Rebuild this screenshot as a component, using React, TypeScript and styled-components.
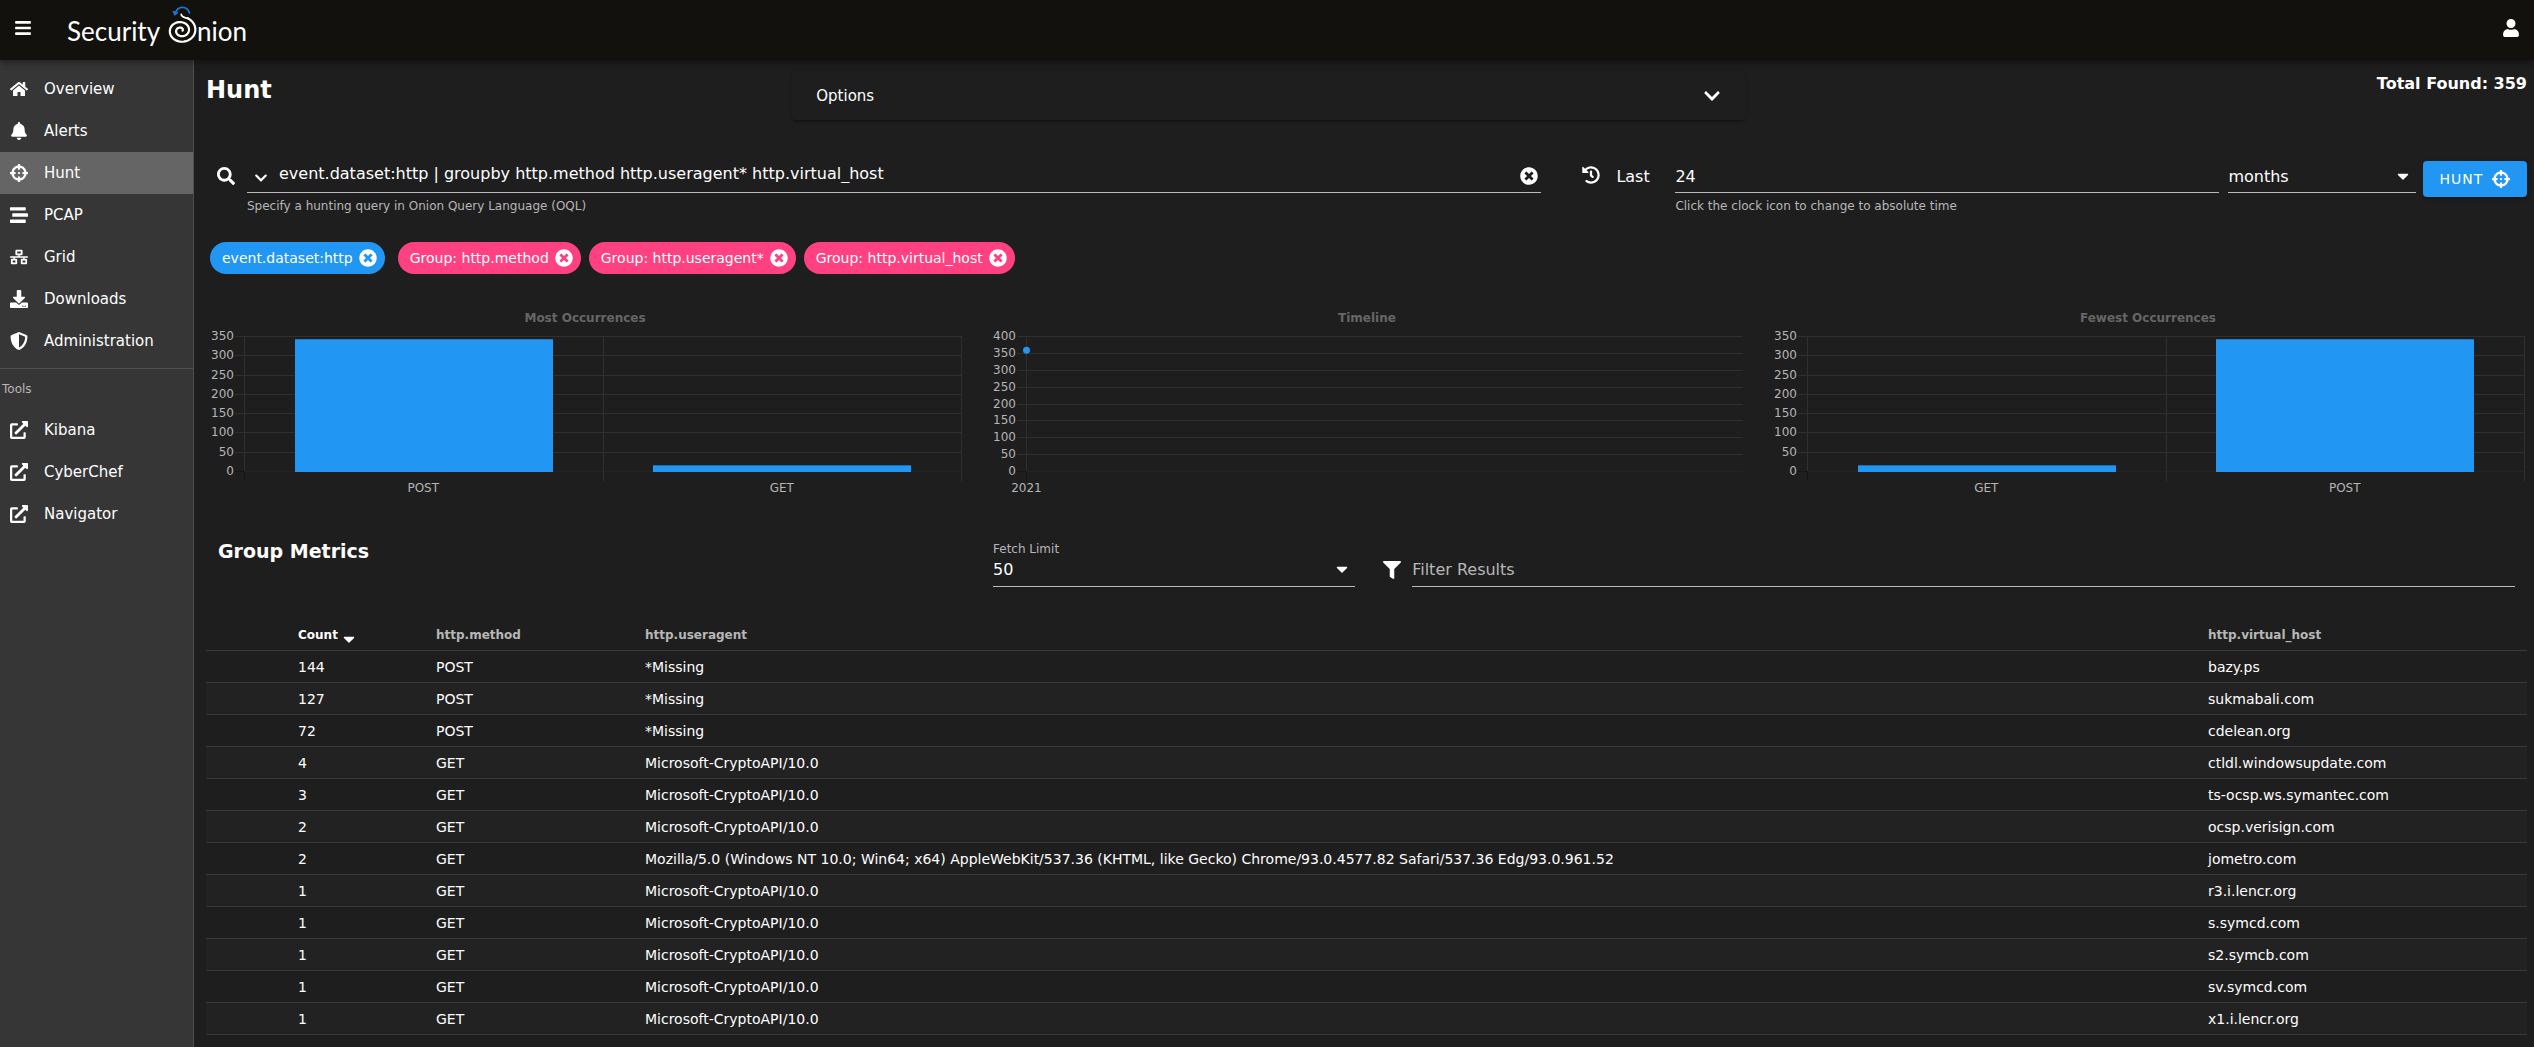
import React, { useLayoutEffect, useRef, useState } from 'react';
import styled, { createGlobalStyle } from 'styled-components';
import {
  FaBars,
  FaBell,
  FaCaretDown,
  FaChevronDown,
  FaCrosshairs,
  FaDownload,
  FaExternalLinkAlt,
  FaFilter,
  FaHistory,
  FaHome,
  FaNetworkWired,
  FaSearch,
  FaShieldAlt,
  FaStream,
  FaTimesCircle,
  FaUser,
} from 'react-icons/fa';

const c = {
  bar: '#12110d',
  page: '#1e1e1e',
  side: '#363636',
  active: '#656565',
  line: '#4f4f4f',
  rowLine: '#3a3a3a',
  rowAlt: '#222222',
  text: '#ffffff',
  muted: '#b7b7b7',
  underline: '#bbbbbb',
  blue: '#2196f3',
  pink: '#ff4081',
};

const GlobalStyle = createGlobalStyle`
  * { box-sizing: border-box; }
  body {
    margin: 0;
    background: ${c.page};
    color: ${c.text};
    font-family: "DejaVu Sans", sans-serif;
    font-size: 16px;
  }
  button, input, select { font: inherit; color: inherit; }
  h1, h2, p { margin: 0; }
`;

const Icon = styled.span<{ $size?: number }>`
  display: inline-flex;
  flex: none;
  svg {
    display: block;
    width: auto;
    height: ${(p) => p.$size ?? 18}px;
  }
`;

const IconButton = styled.button`
  display: inline-flex;
  padding: 0;
  border: 0;
  background: none;
  cursor: pointer;
`;

/* ---------- top bar ---------- */

const TopBar = styled.header`
  position: relative;
  z-index: 1;
  display: flex;
  align-items: center;
  height: 60px;
  padding: 0 14px 4px;
  background: ${c.bar};
  box-shadow: 0 2px 4px -1px rgba(0, 0, 0, 0.2), 0 4px 5px rgba(0, 0, 0, 0.14), 0 1px 10px rgba(0, 0, 0, 0.12);
`;

const LogoLink = styled.a`
  display: block;
  margin: 0 auto 0 36px;
  color: inherit;
  svg { display: block; }
  text { font-family: Lato, sans-serif; font-size: 26px; }
`;

function spiral(cx: number, cy: number, r0: number, r1: number, turns: number, end: number) {
  const steps = 72;
  const pts: string[] = [];
  for (let i = 0; i <= steps; i++) {
    const t = i / steps;
    const a = end + (1 - t) * turns * Math.PI * 2;
    const r = r0 + (r1 - r0) * t;
    pts.push(`${(cx + r * Math.cos(a)).toFixed(2)} ${(cy + r * 0.88 * Math.sin(a)).toFixed(2)}`);
  }
  return 'M' + pts.join('L');
}

function Logo() {
  return (
    <LogoLink href="#" aria-label="Security Onion">
      <svg width="184" height="56" viewBox="66 0 184 56" fill="none" strokeLinecap="round">
        <text x="65" y="41" fill="#fff">Security</text>
        <text x="195" y="41" fill="#fff">nion</text>
        <path d={spiral(179, 30.5, 1.5, 15.5, 2.2, -Math.PI * 0.36)} stroke="#fff" strokeWidth="2.2" />
        <path d="M185.700 18.400 C182 17 179.500 17.500 179.300 14.500" stroke="#fff" strokeWidth="1.8" />
        <path d="M187.500 13 C185 5.500 175.500 5.500 173.200 13.500" stroke="#1976d2" strokeWidth="1.8" />
        <path d="M171 11.500 L172.800 15.200 L175.800 12.800 Z" fill="#1976d2" stroke="#1976d2" />
      </svg>
    </LogoLink>
  );
}

/* ---------- sidebar ---------- */

const Shell = styled.div`
  display: grid;
  grid-template-columns: 194px minmax(0, 1fr);
  min-height: calc(100vh - 60px);
`;

const Sidebar = styled.nav`
  padding-top: 8px;
  background: ${c.side};
  border-right: 1px solid ${c.line};
`;

const NavItem = styled.a<{ $active?: boolean }>`
  display: grid;
  grid-template-columns: 34px 1fr;
  align-items: center;
  height: 42px;
  padding-left: 10px;
  background: ${(p) => (p.$active ? c.active : 'transparent')};
  color: inherit;
  font-size: 15px;
  text-decoration: none;
`;

const NavSection = styled.h2`
  height: 41px;
  margin-top: 6px;
  padding-left: 2px;
  border-top: 1px solid ${c.line};
  color: ${c.muted};
  font-size: 12px;
  font-weight: 400;
  line-height: 40px;
`;

const pages = [
  { label: 'Overview', icon: <FaHome /> },
  { label: 'Alerts', icon: <FaBell /> },
  { label: 'Hunt', icon: <FaCrosshairs />, active: true },
  { label: 'PCAP', icon: <FaStream /> },
  { label: 'Grid', icon: <FaNetworkWired /> },
  { label: 'Downloads', icon: <FaDownload /> },
  { label: 'Administration', icon: <FaShieldAlt /> },
];
const tools = ['Kibana', 'CyberChef', 'Navigator'];

/* ---------- page heading ---------- */

const Main = styled.main`
  padding: 12px 7px 10px 12px;
`;

const HeadRow = styled.div`
  display: grid;
  grid-template-columns: 3fr 5fr 4fr;
`;

const Title = styled.h1`
  padding-top: 2px;
  font-size: 24px;
  line-height: 32px;
`;

const OptionsPanel = styled.button`
  display: flex;
  align-items: center;
  justify-content: space-between;
  height: 48px;
  margin: 0 8px 0 6px;
  padding: 0 24px;
  border: 0;
  border-radius: 4px;
  background: ${c.page};
  box-shadow: 0 3px 1px -2px rgba(0, 0, 0, 0.2), 0 2px 2px rgba(0, 0, 0, 0.14), 0 1px 5px rgba(0, 0, 0, 0.12);
  font-size: 15px;
`;

const Total = styled.p`
  font-weight: 700;
  line-height: 24px;
  text-align: right;
`;

/* ---------- query row ---------- */

const QueryRow = styled.form`
  display: flex;
  align-items: flex-start;
  margin-top: 40px;
  padding-left: 11px;
`;

const Lead = styled.div`
  display: flex;
  align-items: center;
  flex: none;
  height: 32px;
`;

const QueryLead = styled(Lead)`
  width: 30px;
`;

const TimeLead = styled(Lead)`
  gap: 16px;
  width: 93px;
  margin-left: 41px;
`;

const ClockButton = styled(IconButton)`
  padding-bottom: 2px;
`;

const Field = styled.div<{ $grow: number }>`
  flex: ${(p) => p.$grow} 1 0;
  min-width: 0;
`;

const UnitField = styled(Field)`
  margin-left: 9px;
`;

const Line = styled.div`
  display: flex;
  align-items: center;
  height: 33px;
  border-bottom: 1px solid ${c.underline};
`;

const QueryLine = styled(Line)`
  padding: 0 3px 0 7px;
`;

const HistoryButton = styled(IconButton)`
  padding-top: 4px;
`;

const TextInput = styled.input`
  flex: 1;
  min-width: 0;
  width: 100%;
  height: 32px;
  padding: 0;
  border: 0;
  outline: 0;
  background: none;
  &::placeholder { color: ${c.muted}; opacity: 1; }
`;

const QueryInput = styled(TextInput)`
  padding: 0 11px 5px;
`;

const Select = styled.select`
  appearance: none;
  flex: 1;
  min-width: 0;
  height: 28px;
  padding: 0;
  border: 0;
  outline: 0;
  background: none;
`;

const Caret = styled(Icon)`
  padding-right: 4px;
  pointer-events: none;
`;

const Hint = styled.p`
  padding-top: 6px;
  color: ${c.muted};
  font-size: 12px;
  line-height: 14px;
`;

const HuntButton = styled.button`
  display: flex;
  align-items: center;
  justify-content: center;
  gap: 9px;
  flex: none;
  width: 104px;
  height: 36px;
  margin: 1px 0 0 7px;
  padding: 0;
  border: 0;
  border-radius: 4px;
  background: ${c.blue};
  box-shadow: 0 3px 1px -2px rgba(0, 0, 0, 0.2), 0 2px 2px rgba(0, 0, 0, 0.14), 0 1px 5px rgba(0, 0, 0, 0.12);
  font-size: 14px;
  letter-spacing: 1px;
`;

/* ---------- filter chips ---------- */

const Chips = styled.div`
  display: flex;
  gap: 8px;
  margin-top: 29px;
  padding-left: 4px;
`;

const Chip = styled.span<{ $tone: 'blue' | 'pink' }>`
  display: inline-flex;
  align-items: center;
  gap: 6px;
  height: 32px;
  margin-right: ${(p) => (p.$tone === 'blue' ? 5 : 0)}px;
  padding: 0 8px 0 12px;
  border-radius: 16px;
  background: ${(p) => c[p.$tone]};
  font-size: 14px;
`;

function FilterChip({ tone, label }: { tone: 'blue' | 'pink'; label: string }) {
  return (
    <Chip $tone={tone}>
      {label}
      <IconButton type="button" aria-label={`Remove ${label}`}><Icon><FaTimesCircle /></Icon></IconButton>
    </Chip>
  );
}

/* ---------- charts ---------- */

const ChartRow = styled.div`
  display: grid;
  grid-template-columns: repeat(3, minmax(0, 1fr));
  gap: 24px;
  margin-top: 26px;
`;

const ChartSvg = styled.svg`
  display: block;
  width: 100%;
  height: 200px;
  font-size: 12px;
`;

type ChartProps = {
  title: string;
  max: number;
  bars?: { label: string; value: number }[];
  point?: { label: string; value: number };
};

function Chart({ title, max, bars, point }: ChartProps) {
  const ref = useRef<SVGSVGElement>(null);
  const [width, setWidth] = useState(758);
  useLayoutEffect(() => {
    const measure = () => ref.current && setWidth(Math.round(ref.current.getBoundingClientRect().width));
    measure();
    window.addEventListener('resize', measure);
    return () => window.removeEventListener('resize', measure);
  }, []);

  const left = 38;
  const right = width - 3;
  const top = 36;
  const bottom = 171;
  const y = (v: number) => bottom + 0.5 - (v / max) * (bottom - top);
  const ticks = Array.from({ length: max / 50 + 1 }, (_, i) => i * 50);
  const slot = bars ? (right - left) / bars.length : 0;

  return (
    <ChartSvg ref={ref} role="img" aria-label={title}>
      <text x={width / 2} y="22" textAnchor="middle" fontWeight="700" fill="#666">{title}</text>
      {ticks.map((v) => (
        <g key={v}>
          <line x1={left - 9} x2={right} y1={Math.floor(y(v)) + 0.5} y2={Math.floor(y(v)) + 0.5} stroke={v ? '#2f2f2f' : '#242424'} />
          <text x={left - 10} y={Math.floor(y(v)) + 4} textAnchor="end" fill="#b5b5b5">{v}</text>
        </g>
      ))}
      <line x1={left - 9} x2={left} y1={bottom + 0.5} y2={bottom + 0.5} stroke="#151515" />
      <line x1={left + 0.5} x2={left + 0.5} y1={top} y2={bottom} stroke="#2f2f2f" />
      <line x1={left + 0.5} x2={left + 0.5} y1={bottom} y2={bottom + 10} stroke="#151515" />
      {bars?.map((b, i) => {
        const x = Math.round(left + slot * (i + 1)) + 0.5;
        return <line key={b.label} x1={x} x2={x} y1={top} y2={bottom + 10} stroke="#2f2f2f" />;
      })}
      {bars?.map((b, i) => (
        <g key={b.label}>
          <rect x={Math.ceil(left + slot * (i + 0.14))} y={y(b.value)} width={Math.round(slot * 0.72)} height={bottom + 1 - y(b.value)} fill={c.blue} />
          <text x={left + slot * (i + 0.5)} y="192" textAnchor="middle" fill="#b5b5b5">{b.label}</text>
        </g>
      ))}
      {point && (
        <g>
          <circle cx={left + 0.5} cy={y(point.value)} r="3.5" fill={c.blue} />
          <text x={left + 0.5} y="192" textAnchor="middle" fill="#b5b5b5">{point.label}</text>
        </g>
      )}
    </ChartSvg>
  );
}

/* ---------- group metrics ---------- */

const MetricsHead = styled.div`
  display: grid;
  grid-template-columns: 33fr 16fr 50fr;
  gap: 28px;
  margin-top: 40px;
  padding: 0 12px;
`;

const Subtitle = styled.h2`
  font-size: 19px;
  line-height: 22px;
`;

const SelectLabel = styled.label`
  display: block;
  color: ${c.muted};
  font-size: 12px;
  line-height: 18px;
`;

const MetricLine = styled(Line)`
  height: 29px;
  padding-bottom: 6px;
`;

const FilterBox = styled.div`
  display: flex;
  align-items: flex-end;
  gap: 11px;
`;

const FilterIcon = styled.label`
  display: inline-flex;
  padding-bottom: 8px;
`;

const FilterLine = styled(MetricLine)`
  flex: 1;
`;

const FilterInput = styled(TextInput)`
  height: 28px;
`;

const Table = styled.table`
  width: 100%;
  margin-top: 32px;
  border-spacing: 0;
  table-layout: fixed;
  font-size: 14px;
  text-align: left;
`;

const Col = styled.col<{ $w?: number }>`
  width: ${(p) => (p.$w ? `${p.$w}px` : 'auto')};
`;

const Th = styled.th<{ $sorted?: boolean }>`
  height: 32px;
  padding: 0 16px;
  border-bottom: 1px solid ${c.rowLine};
  color: ${(p) => (p.$sorted ? c.text : c.muted)};
  font-size: 12px;
`;

const SortButton = styled(IconButton)`
  align-items: center;
  gap: 2px;
  font-weight: 700;
`;

const SortIcon = styled(Icon)`
  height: 18px;
  padding-top: 4px;
`;

const Row = styled.tr`
  &:nth-child(even) { background: ${c.rowAlt}; }
`;

const Td = styled.td`
  height: 32px;
  padding: 0 16px;
  border-bottom: 1px solid ${c.rowLine};
  white-space: nowrap;
`;

const crypto = 'Microsoft-CryptoAPI/10.0';
const edge =
  'Mozilla/5.0 (Windows NT 10.0; Win64; x64) AppleWebKit/537.36 (KHTML, like Gecko) Chrome/93.0.4577.82 Safari/537.36 Edg/93.0.961.52';
const rows: [number, string, string, string][] = [
  [144, 'POST', '*Missing', 'bazy.ps'],
  [127, 'POST', '*Missing', 'sukmabali.com'],
  [72, 'POST', '*Missing', 'cdelean.org'],
  [4, 'GET', crypto, 'ctldl.windowsupdate.com'],
  [3, 'GET', crypto, 'ts-ocsp.ws.symantec.com'],
  [2, 'GET', crypto, 'ocsp.verisign.com'],
  [2, 'GET', edge, 'jometro.com'],
  [1, 'GET', crypto, 'r3.i.lencr.org'],
  [1, 'GET', crypto, 's.symcd.com'],
  [1, 'GET', crypto, 's2.symcb.com'],
  [1, 'GET', crypto, 'sv.symcd.com'],
  [1, 'GET', crypto, 'x1.i.lencr.org'],
];

const post = { label: 'POST', value: 343 };
const get = { label: 'GET', value: 16 };

export default function App() {
  return (
    <>
      <GlobalStyle />
      <TopBar>
        <IconButton aria-label="Menu"><Icon><FaBars /></Icon></IconButton>
        <Logo />
        <IconButton aria-label="Account"><Icon><FaUser /></Icon></IconButton>
      </TopBar>
      <Shell>
        <Sidebar>
          {pages.map((p) => (
            <NavItem key={p.label} href="#" $active={p.active}>
              <Icon>{p.icon}</Icon>
              {p.label}
            </NavItem>
          ))}
          <NavSection>Tools</NavSection>
          {tools.map((t) => (
            <NavItem key={t} href="#">
              <Icon><FaExternalLinkAlt /></Icon>
              {t}
            </NavItem>
          ))}
        </Sidebar>
        <Main>
          <HeadRow>
            <Title>Hunt</Title>
            <OptionsPanel type="button">
              Options
              <Icon><FaChevronDown /></Icon>
            </OptionsPanel>
            <Total>Total Found: 359</Total>
          </HeadRow>

          <QueryRow onSubmit={(e) => e.preventDefault()}>
            <QueryLead>
              <Icon><FaSearch /></Icon>
            </QueryLead>
            <Field $grow={69}>
              <QueryLine>
                <HistoryButton type="button" aria-label="Saved queries">
                  <Icon $size={14}><FaChevronDown /></Icon>
                </HistoryButton>
                <QueryInput
                  aria-label="Hunting query"
                  defaultValue="event.dataset:http | groupby http.method http.useragent* http.virtual_host"
                />
                <IconButton type="button" aria-label="Clear query"><Icon><FaTimesCircle /></Icon></IconButton>
              </QueryLine>
              <Hint>Specify a hunting query in Onion Query Language (OQL)</Hint>
            </Field>
            <TimeLead>
              <ClockButton type="button" aria-label="Use absolute time"><Icon><FaHistory /></Icon></ClockButton>
              <label htmlFor="duration">Last</label>
            </TimeLead>
            <Field $grow={29}>
              <Line>
                <TextInput id="duration" defaultValue="24" />
              </Line>
              <Hint>Click the clock icon to change to absolute time</Hint>
            </Field>
            <UnitField $grow={10}>
              <Line>
                <Select aria-label="Time unit" defaultValue="months">
                  <option>days</option>
                  <option>months</option>
                </Select>
                <Caret><FaCaretDown /></Caret>
              </Line>
            </UnitField>
            <HuntButton type="submit">
              HUNT
              <Icon><FaCrosshairs /></Icon>
            </HuntButton>
          </QueryRow>

          <Chips>
            <FilterChip tone="blue" label="event.dataset:http" />
            <FilterChip tone="pink" label="Group: http.method" />
            <FilterChip tone="pink" label="Group: http.useragent*" />
            <FilterChip tone="pink" label="Group: http.virtual_host" />
          </Chips>

          <ChartRow>
            <Chart title="Most Occurrences" max={350} bars={[post, get]} />
            <Chart title="Timeline" max={400} point={{ label: '2021', value: 359 }} />
            <Chart title="Fewest Occurrences" max={350} bars={[get, post]} />
          </ChartRow>

          <MetricsHead>
            <Subtitle>Group Metrics</Subtitle>
            <div>
              <SelectLabel htmlFor="limit">Fetch Limit</SelectLabel>
              <MetricLine>
                <Select id="limit" defaultValue="50">
                  <option>50</option>
                  <option>100</option>
                </Select>
                <Caret><FaCaretDown /></Caret>
              </MetricLine>
            </div>
            <FilterBox>
              <FilterIcon htmlFor="filter" aria-label="Filter Results"><Icon><FaFilter /></Icon></FilterIcon>
              <FilterLine>
                <FilterInput id="filter" placeholder="Filter Results" />
              </FilterLine>
            </FilterBox>
          </MetricsHead>

          <Table>
            <colgroup>
              <Col $w={76} />
              <Col $w={138} />
              <Col $w={209} />
              <Col />
              <Col $w={335} />
            </colgroup>
            <thead>
              <tr>
                <Th />
                <Th $sorted aria-sort="descending">
                  <SortButton type="button">
                    Count
                    <SortIcon><FaCaretDown /></SortIcon>
                  </SortButton>
                </Th>
                <Th>http.method</Th>
                <Th>http.useragent</Th>
                <Th>http.virtual_host</Th>
              </tr>
            </thead>
            <tbody>
              {rows.map(([count, method, agent, host]) => (
                <Row key={host}>
                  <Td />
                  <Td>{count}</Td>
                  <Td>{method}</Td>
                  <Td>{agent}</Td>
                  <Td>{host}</Td>
                </Row>
              ))}
            </tbody>
          </Table>
        </Main>
      </Shell>
    </>
  );
}
